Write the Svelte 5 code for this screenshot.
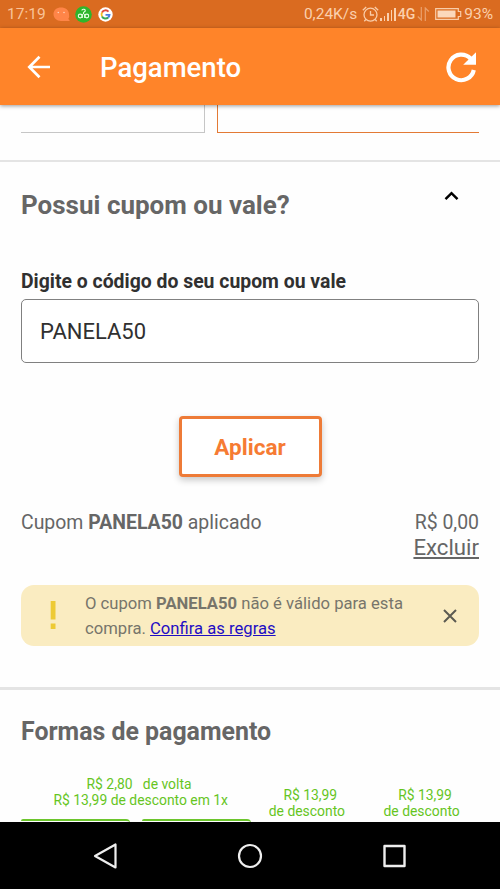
<script>
  const cupom = 'PANELA50';

  let codigo = $state(cupom);
  let aberto = $state(true);
  let aviso = $state(true);

  const sinal = [3, 5, 8, 11, 13];

  const formas = [
    { linhas: ['R$ 2,80\u00a0\u00a0 de volta\u00a0', 'R$ 13,99 de desconto em 1x'], larga: true },
    { linhas: ['\u00a0\u00a0R$ 13,99', 'de desconto'] },
    { linhas: ['\u00a0\u00a0R$ 13,99', 'de desconto'] },
  ];
</script>

<div class="screen">
  <div class="status-bar">
    <span class="clock">17:19</span>
    <svg class="chat" width="17" height="15" viewBox="0 0 17 15">
      <path d="M8 0.5C3.7 0.5 0.5 3.2 0.5 7s3.2 7 7.5 7h8c.7 0 .8-.6.3-1l-1-1.1A6.3 6.3 0 0 0 16 7C16 3.2 12.500.5 8 .5z" fill="#ff8548" />
      <circle cx="5.300" cy="5.500" r=".8" fill="#ffd2b8" />
      <circle cx="11" cy="5.500" r=".8" fill="#ffd2b8" />
    </svg>
    <svg class="clover" width="17" height="17" viewBox="0 0 17 17">
      <circle cx="8.500" cy="8.500" r="8.300" fill="#2eb62c" />
      <g fill="none" stroke="#e9ffe5" stroke-width="1.100">
        <circle cx="5.200" cy="10" r="1.900" />
        <circle cx="11.800" cy="10" r="1.900" />
        <path d="M6.900 4.600a1.700 1.400 0 1 1 2.300 1.300L8.500 6.700v1.500M7.300 8v3.900M9.700 8v3.900" />
      </g>
    </svg>
    <svg class="google" width="15" height="15" viewBox="0 0 15 15">
      <circle cx="7.500" cy="7.500" r="7.200" fill="#fff" />
      <g fill="none" stroke-width="1.900">
        <path d="M10.500 4.600A4 4 0 0 0 4 5.500" stroke="#e04a3c" />
        <path d="M4 5.500a4 4 0 0 0 0 4" stroke="#f3bc20" />
        <path d="M4 9.500a4 4 0 0 0 6.200 1" stroke="#3aa757" />
        <path d="M10.200 10.500a4 4 0 0 0 1.300-2.600H7.500" stroke="#4a7fe0" />
      </g>
    </svg>

    <div class="status-right">
      <span class="speed">0,24K/s</span>
      <svg class="alarm" width="17" height="17" viewBox="0 0 17 17" fill="none" stroke="#f9cda9" stroke-width="1.300">
        <circle cx="8.500" cy="8.700" r="6.500" />
        <path d="M8.500 5v4h3.500M.8 4.300 4.200 1M12.800 1l3.400 3.300M3.800 13.500l-1.500 1.700M13.200 13.500l1.500 1.700" />
      </svg>
      <div class="signal">
        {#each sinal as altura}
          <i style:height="{altura}px"></i>
        {/each}
      </div>
      <span class="net">4G</span>
      <svg class="updown" width="13" height="14" viewBox="0 0 13 14" fill="none" stroke="#eaa06c" stroke-width="1.200">
        <path d="M4.300 0v13L.8 9.500M8.300 14V1l3.500 3.500" />
      </svg>
      <svg class="battery" width="27" height="12" viewBox="0 0 27 12">
        <path d="M.7.700h22.600v2.800h2.400v5h-2.400v2.800H.7z" fill="none" stroke="#f9cda9" stroke-width="1.200" />
        <path d="M2.500 2.500h18v7h-18z" fill="#fbd8bb" />
      </svg>
      <span class="percent">93%</span>
    </div>
  </div>

  <header>
    <button class="icon-btn" aria-label="Voltar">
      <svg width="24" height="24" viewBox="0 0 24 24" fill="none" stroke="#fff" stroke-width="2.700">
        <path d="M23 12H3M12.500 1.800 2.300 12l10.200 10.200" />
      </svg>
    </button>
    <h1>Pagamento</h1>
    <button class="icon-btn" aria-label="Atualizar">
      <svg width="32" height="32" viewBox="0 0 32 32">
        <path d="M25.500 7.500A12.800 12.800 0 1 0 28.800 19" fill="none" stroke="#fff" stroke-width="4.200" />
        <path d="M31 1.300v12.500H18.200z" fill="#fff" />
      </svg>
    </button>
  </header>

  <main>
    <div class="cards">
      <div class="card"></div>
      <div class="card selected"></div>
    </div>

    <section class="coupon">
      <div class="section-head">
        <h2>Possui cupom ou vale?</h2>
        <button class="icon-btn toggle" aria-label="Recolher" onclick={() => (aberto = !aberto)}>
          <svg width="15" height="10" viewBox="0 0 15 10" fill="none" stroke="#000" stroke-width="2.500">
            <path d="M1.500 8.200 7.500 2.200l6 6" />
          </svg>
        </button>
      </div>

      {#if aberto}
        <label for="codigo">Digite o código do seu cupom ou vale</label>
        <input id="codigo" type="text" bind:value={codigo} />
        <button class="apply">Aplicar</button>

        <div class="applied">
          <span class="applied-name">Cupom <b>{cupom}</b> aplicado</span>
          <div class="applied-value">
            <span>R$ 0,00</span>
            <span class="remove">Excluir</span>
          </div>
        </div>
      {/if}

      {#if aviso}
        <div class="alert">
          <svg class="mark" width="6" height="29" viewBox="0 0 6 29" fill="#edca35">
            <path d="M.7 0h4.800v18.500H.7zM.7 22.500h4.800V28H.7z" />
          </svg>
          <p>
            <span class="msg">O cupom <b>{cupom}</b> não é válido para esta</span><br />
            compra. <span class="rules">Confira as regras</span>
          </p>
          <button class="icon-btn" aria-label="Fechar" onclick={() => (aviso = false)}>
            <svg width="14" height="14" viewBox="0 0 14 14" fill="none" stroke="#5b5a51" stroke-width="2">
              <path d="M1 1l12 12M13 1 1 13" />
            </svg>
          </button>
        </div>
      {/if}
    </section>

    <section class="payment">
      <h2>Formas de pagamento</h2>
      <div class="methods">
        {#each formas as forma}
          <div class="method" class:wide={forma.larga}>
            {#each forma.linhas as linha}
              <span>{linha}</span>
            {/each}
          </div>
        {/each}
      </div>
      <div class="tabs">
        <div class="tab"></div>
        <div class="tab"></div>
      </div>
    </section>
  </main>

  <nav>
    <svg width="26" height="28" viewBox="0 0 26 28" fill="none" stroke="#eee" stroke-width="2.200" stroke-linejoin="round">
      <path d="M22.500 2.500v23L2 14z" />
    </svg>
    <svg width="26" height="28" viewBox="0 0 26 28" fill="none" stroke="#eee" stroke-width="2.200">
      <circle cx="13" cy="14" r="11" />
    </svg>
    <svg width="26" height="28" viewBox="0 0 26 28" fill="none" stroke="#eee" stroke-width="2.400" stroke-linejoin="round">
      <path d="M3.500 4h20v20h-20z" />
    </svg>
  </nav>
</div>

<style>
  :global(body) {
    margin: 0;
    background: #fff;
  }

  .screen {
    display: flex;
    flex-direction: column;
    width: 500px;
    height: 889px;
    overflow: hidden;
    font-family: Roboto, 'Liberation Sans', sans-serif;
    color: #666;
    background: #fefefe;
  }

  h1, h2, p {
    margin: 0;
  }

  button {
    font-family: inherit;
    cursor: pointer;
  }

  svg {
    display: block;
    flex-shrink: 0;
  }

  .icon-btn {
    display: flex;
    padding: 0;
    background: none;
    border: none;
  }

  /* Status bar */
  .status-bar {
    display: flex;
    align-items: center;
    flex-shrink: 0;
    box-sizing: border-box;
    height: 28px;
    padding: 0 7px;
    font-size: 15.500px;
    line-height: 28px;
    color: #f9c49a;
    background: #da6b20;
  }

  .clock { width: 46px; }
  .clover { margin-left: 5px; }
  .google { margin-left: 6px; }

  .status-right {
    display: flex;
    align-items: center;
    margin-left: auto;
    color: #fbd0ad;
  }

  .alarm { margin-left: 5px; }

  .signal {
    display: flex;
    align-items: flex-end;
    gap: 2px;
    height: 13px;
    margin-left: 1px;
  }

  .signal i {
    width: 1.500px;
    background: #fbd0ad;
  }

  .net {
    margin-left: 2px;
    font-size: 14px;
    font-weight: 500;
  }

  .updown { margin-left: 2px; }
  .battery { margin: 0 2px 0 5px; }
  .percent { font-size: 15.500px; }

  /* App bar */
  header {
    position: relative;
    display: flex;
    align-items: center;
    flex-shrink: 0;
    box-sizing: border-box;
    height: 77px;
    padding: 1px 23px 0 27px;
    background: #ff8429;
    box-shadow: 0 1px 4px rgba(0, 0, 0, 0.4);
  }

  h1 {
    flex: 1;
    margin-left: 49px;
    font-size: 27.500px;
    font-weight: 500;
    color: #fff;
  }

  main {
    flex: 1;
    min-height: 0;
    overflow: hidden;
  }

  .cards {
    display: grid;
    grid-template-columns: 184px 262px;
    gap: 12px;
    height: 28px;
    padding: 0 21px 27px;
    border-bottom: 2px solid #e4e4e4;
  }

  .card {
    border: solid #c6c6c6;
    border-width: 0 1px 1px 0;
  }

  .card.selected {
    border-color: #e37a35;
    border-width: 0 0 1.500px 1px;
  }

  h2 {
    font-size: 26px;
    font-weight: 700;
    line-height: 30px;
  }

  /* Coupon */
  .coupon {
    display: flex;
    flex-direction: column;
    box-sizing: border-box;
    height: 528px;
    padding: 28px 21px 0;
    border-bottom: 3px solid #e4e4e4;
  }

  .section-head {
    display: flex;
    justify-content: space-between;
  }

  .toggle {
    align-self: flex-start;
    margin: 1px 20px 0 0;
  }

  label {
    margin-top: 50px;
    font-size: 19.400px;
    font-weight: 700;
    line-height: 24px;
    color: #303030;
  }

  input {
    box-sizing: border-box;
    width: 458px;
    height: 64px;
    margin-top: 5px;
    padding: 0 18px;
    font: 22px Roboto, sans-serif;
    color: #303030;
    background: #fff;
    border: 1px solid #808080;
    border-radius: 5px;
  }

  .apply {
    align-self: center;
    width: 143px;
    height: 61px;
    margin-top: 53px;
    padding: 0;
    font-size: 22.500px;
    font-weight: 700;
    color: #f67b33;
    background: #fff;
    border: 3px solid #ee7b37;
    border-radius: 4px;
    box-shadow: 0 3px 7px rgba(0, 0, 0, 0.22);
  }

  .applied {
    display: flex;
    justify-content: space-between;
    margin-top: 33px;
    font-size: 19.450px;
    line-height: 25px;
  }

  .applied-value {
    display: flex;
    flex-direction: column;
    align-items: flex-end;
  }

  .remove {
    font-size: 22.200px;
    text-decoration: underline;
  }

  .alert {
    display: flex;
    align-items: center;
    box-sizing: border-box;
    height: 61px;
    margin-top: 25px;
    padding: 0 22px 0 29px;
    background: #faecc1;
    border-radius: 13px;
  }

  .alert p {
    flex: 1;
    margin-left: 29px;
    font-size: 16.650px;
    line-height: 25px;
    color: #77756b;
    white-space: nowrap;
  }

  .rules {
    color: #1e0ec4;
    text-decoration: underline;
  }

  /* Payment */
  .payment {
    padding: 27px 21px 0;
  }

  .payment h2 {
    font-size: 24.900px;
  }

  .methods {
    display: flex;
    align-items: flex-end;
    margin-top: 29px;
    font-size: 13.900px;
    line-height: 16px;
    color: #66c51e;
  }

  .method {
    display: flex;
    flex-direction: column;
    align-items: center;
    width: 115px;
  }

  .method.wide {
    width: 240px;
    margin-right: -11px;
    padding-bottom: 11px;
  }

  .tabs {
    display: flex;
    gap: 12px;
  }

  .tab {
    width: 109px;
    height: 20px;
    border-top: 2px solid #6cc52c;
    border-radius: 2px 4px 0 0;
  }

  /* Navigation bar */
  nav {
    display: flex;
    align-items: center;
    justify-content: center;
    gap: 118px;
    flex-shrink: 0;
    height: 67px;
    background: #000;
  }
</style>
